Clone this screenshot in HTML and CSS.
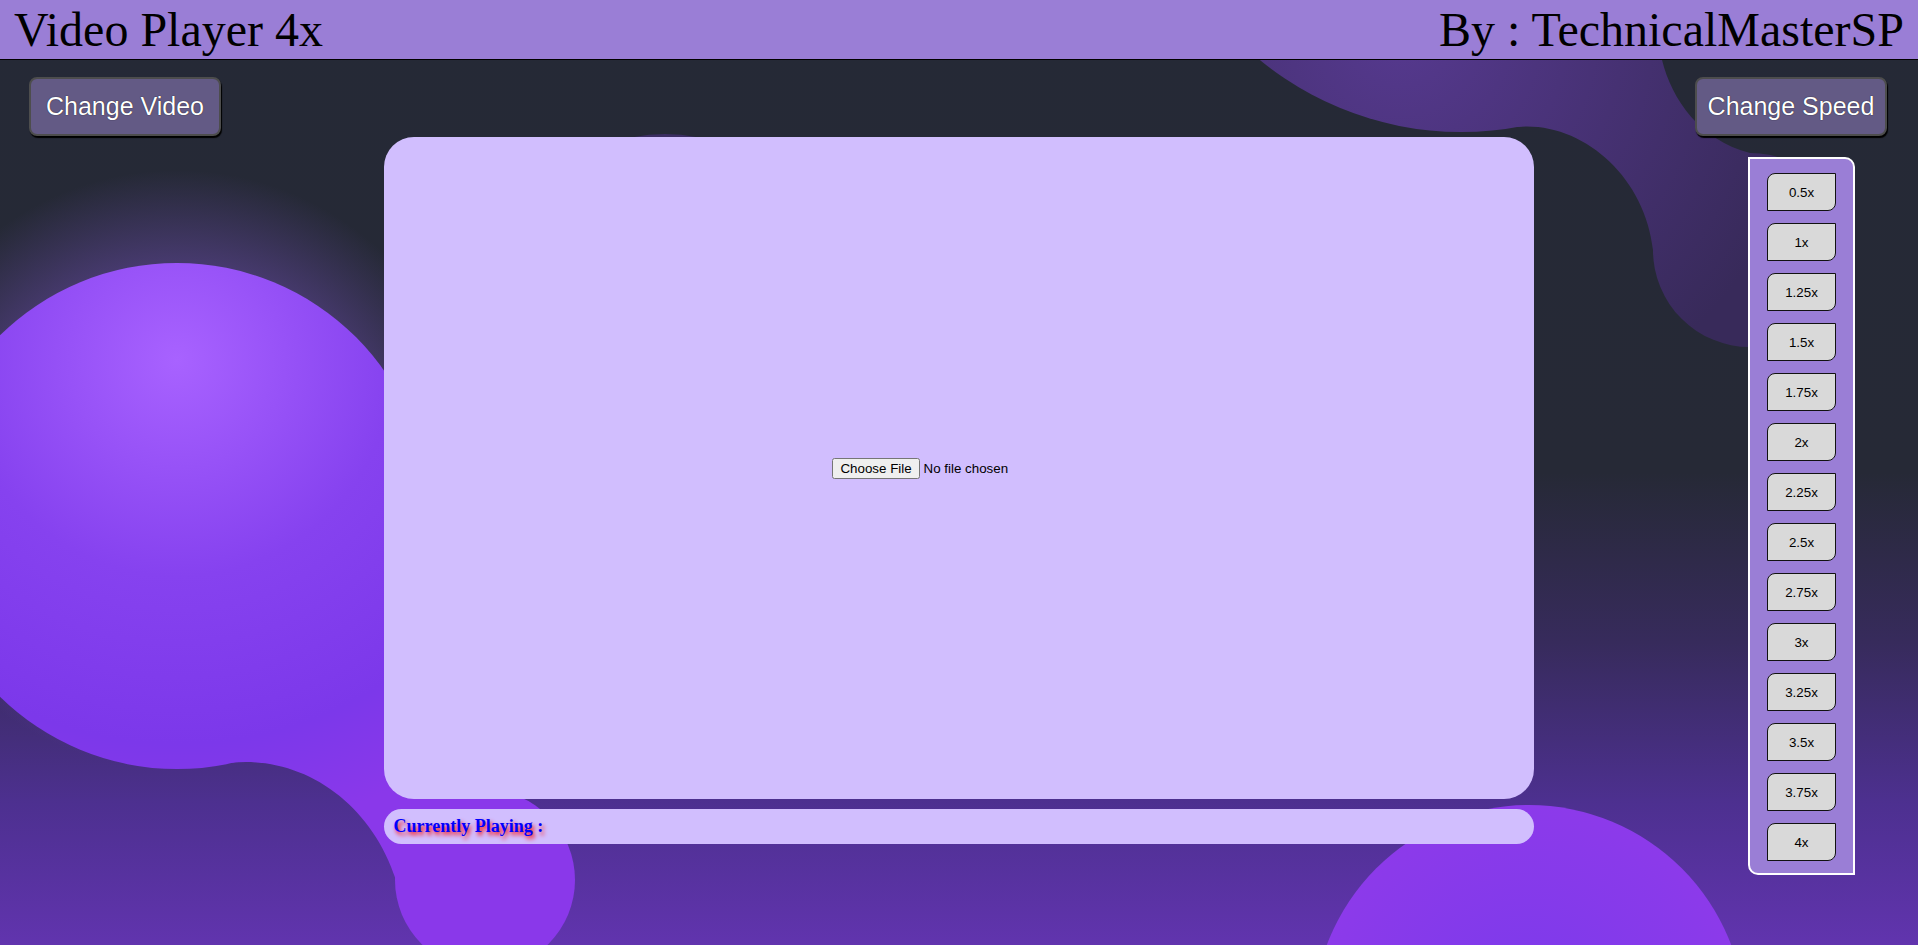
FILE: index.html
```html
<!DOCTYPE html>
<html lang="en">
<head>
<meta charset="utf-8">
<title>Video Player 4x</title>
<link rel="stylesheet" href="styles.css">
</head>
<body>
<svg class="bg" viewBox="0 0 1918 945" preserveAspectRatio="none" aria-hidden="true">
  <defs>
    <linearGradient id="bgGrad" x1="0" y1="0" x2="0" y2="945" gradientUnits="userSpaceOnUse">
      <stop offset="0" stop-color="#252936"/>
      <stop offset="0.5" stop-color="#262936"/>
      <stop offset="0.68" stop-color="#372b5c"/>
      <stop offset="0.85" stop-color="#4d3090"/>
      <stop offset="1" stop-color="#6134ae"/>
    </linearGradient>
    <radialGradient id="glow" cx="177" cy="470" r="300" gradientUnits="userSpaceOnUse">
      <stop offset="0.7" stop-color="#8a5ce0" stop-opacity="0.32"/>
      <stop offset="1" stop-color="#8a5ce0" stop-opacity="0"/>
    </radialGradient>
    <radialGradient id="leftBlob" cx="177" cy="360" r="480" gradientUnits="userSpaceOnUse">
      <stop offset="0" stop-color="#a862ff"/>
      <stop offset="0.45" stop-color="#8642ef"/>
      <stop offset="0.8" stop-color="#7c38ea"/>
      <stop offset="1" stop-color="#8a38ea"/>
    </radialGradient>
    <radialGradient id="darkBlob" cx="1400" cy="30" r="420" gradientUnits="userSpaceOnUse">
      <stop offset="0" stop-color="#56398f"/>
      <stop offset="1" stop-color="#382a5a"/>
    </radialGradient>
    <radialGradient id="brBlob" cx="1529" cy="1021" r="216" gradientUnits="userSpaceOnUse">
      <stop offset="0" stop-color="#7a3aeb"/>
      <stop offset="1" stop-color="#8c3aea"/>
    </radialGradient>
  </defs>
  <rect width="1918" height="945" fill="url(#bgGrad)"/>
  <circle cx="177" cy="470" r="300" fill="url(#glow)"/>
  <g fill="url(#leftBlob)">
    <circle cx="177" cy="516" r="253"/>
    <circle cx="485" cy="880" r="90"/>
    <path d="M 230 763 C 300 755 370 800 396 880 L 480 880 L 480 600 L 300 600 Z"/>
  </g>
  <g fill="url(#darkBlob)">
    <circle cx="1461" cy="-185" r="317"/>
    <circle cx="1750" cy="250" r="97"/>
    <path d="M 1516 127 C 1580 120 1645 175 1653 250 L 1750 250 L 1750 153 C 1700 140 1672 100 1662 60 L 1662 0 L 1500 0 Z"/>
  </g>
  <circle cx="665" cy="300" r="166" fill="#3b2d62"/>
  <circle cx="1529" cy="1021" r="216" fill="url(#brBlob)"/>
</svg>

<header class="topbar">
  <h1 class="title">Video Player 4x</h1>
  <h1 class="title">By : TechnicalMasterSP</h1>
</header>

<main class="stage">
  <aside class="left-col">
    <button class="btn-main">Change Video</button>
  </aside>
  <section class="center-col">
    <div class="video-box">
      <input class="file-input" type="file" accept="video/*">
    </div>
    <div class="now-playing">
      <span class="np-label">Currently Playing :</span>
    </div>
  </section>
  <aside class="right-col">
    <button class="btn-main">Change Speed</button>
    <div class="speed-panel">
      <button class="speed-btn">0.5x</button>
      <button class="speed-btn">1x</button>
      <button class="speed-btn">1.25x</button>
      <button class="speed-btn">1.5x</button>
      <button class="speed-btn">1.75x</button>
      <button class="speed-btn">2x</button>
      <button class="speed-btn">2.25x</button>
      <button class="speed-btn">2.5x</button>
      <button class="speed-btn">2.75x</button>
      <button class="speed-btn">3x</button>
      <button class="speed-btn">3.25x</button>
      <button class="speed-btn">3.5x</button>
      <button class="speed-btn">3.75x</button>
      <button class="speed-btn">4x</button>
    </div>
  </aside>
</main>
</body>
</html>
```

FILE: styles.css
```css
html, body {
  margin: 0;
  padding: 0;
}

body {
  position: relative;
  height: 100vh;
  overflow: hidden;
  background: #252936;
  font-family: "Liberation Sans", Arial, sans-serif;
}

.bg {
  position: absolute;
  top: 0;
  left: 0;
  width: 100%;
  height: 100%;
  z-index: 0;
}

.topbar {
  position: relative;
  z-index: 1;
  display: flex;
  justify-content: space-between;
  align-items: flex-start;
  height: 59px;
  padding: 0 14px;
  background: #9a7ed6;
  border-bottom: 1px solid #000;
}

.title {
  margin: 0;
  padding-top: 3px;
  font-family: "Liberation Serif", "Times New Roman", serif;
  font-weight: normal;
  font-size: 48px;
  line-height: 54px;
  color: #000;
}

.stage {
  position: relative;
  z-index: 1;
  display: grid;
  grid-template-columns: 1fr 60% 1fr;
}

.left-col {
  padding: 17px 0 0 29px;
}

.btn-main {
  box-sizing: border-box;
  width: 192px;
  height: 59px;
  padding: 0;
  background: #635a85;
  color: #fff;
  font-family: "Liberation Sans", Arial, sans-serif;
  font-size: 25px;
  border: 2px solid #4d4d4d;
  border-radius: 8px;
  box-shadow: 1px 2px 1px #000;
  text-shadow: 0 0 1px #000;
}

.center-col {
  display: flex;
  flex-direction: column;
  gap: 10px;
  padding-top: 77px;
}

.video-box {
  height: 662px;
  border-radius: 30px;
  background: #d1befe;
  display: flex;
  align-items: center;
  justify-content: center;
}

.file-input {
  font-family: "Liberation Sans", Arial, sans-serif;
  font-size: 13.333px;
  color: #000;
}

.now-playing {
  height: 35px;
  border-radius: 18px;
  background: #d1befe;
  display: flex;
  align-items: center;
  padding-left: 10px;
}

.np-label {
  font-family: "Liberation Serif", "Times New Roman", serif;
  font-weight: bold;
  font-size: 18px;
  color: #0000ff;
  text-shadow: 2px 3px 4px #ff0000;
}

.right-col {
  display: flex;
  flex-direction: column;
  align-items: flex-end;
  padding: 17px 31px 0 0;
}

.speed-panel {
  box-sizing: border-box;
  width: 107px;
  margin: 21px 32px 0 0;
  padding: 14px 0 12px;
  background: #9a7ed6;
  border: 2px solid #fff;
  border-radius: 0 10px 0 10px;
  display: flex;
  flex-direction: column;
  align-items: center;
  gap: 12px;
}

.speed-btn {
  box-sizing: border-box;
  width: 69px;
  height: 38px;
  padding: 0;
  background: #d9d9d9;
  color: #000;
  border: 1.5px solid #111;
  border-radius: 8px 0 8px 0;
  font-family: "Liberation Sans", Arial, sans-serif;
  font-size: 13.333px;
}
```
